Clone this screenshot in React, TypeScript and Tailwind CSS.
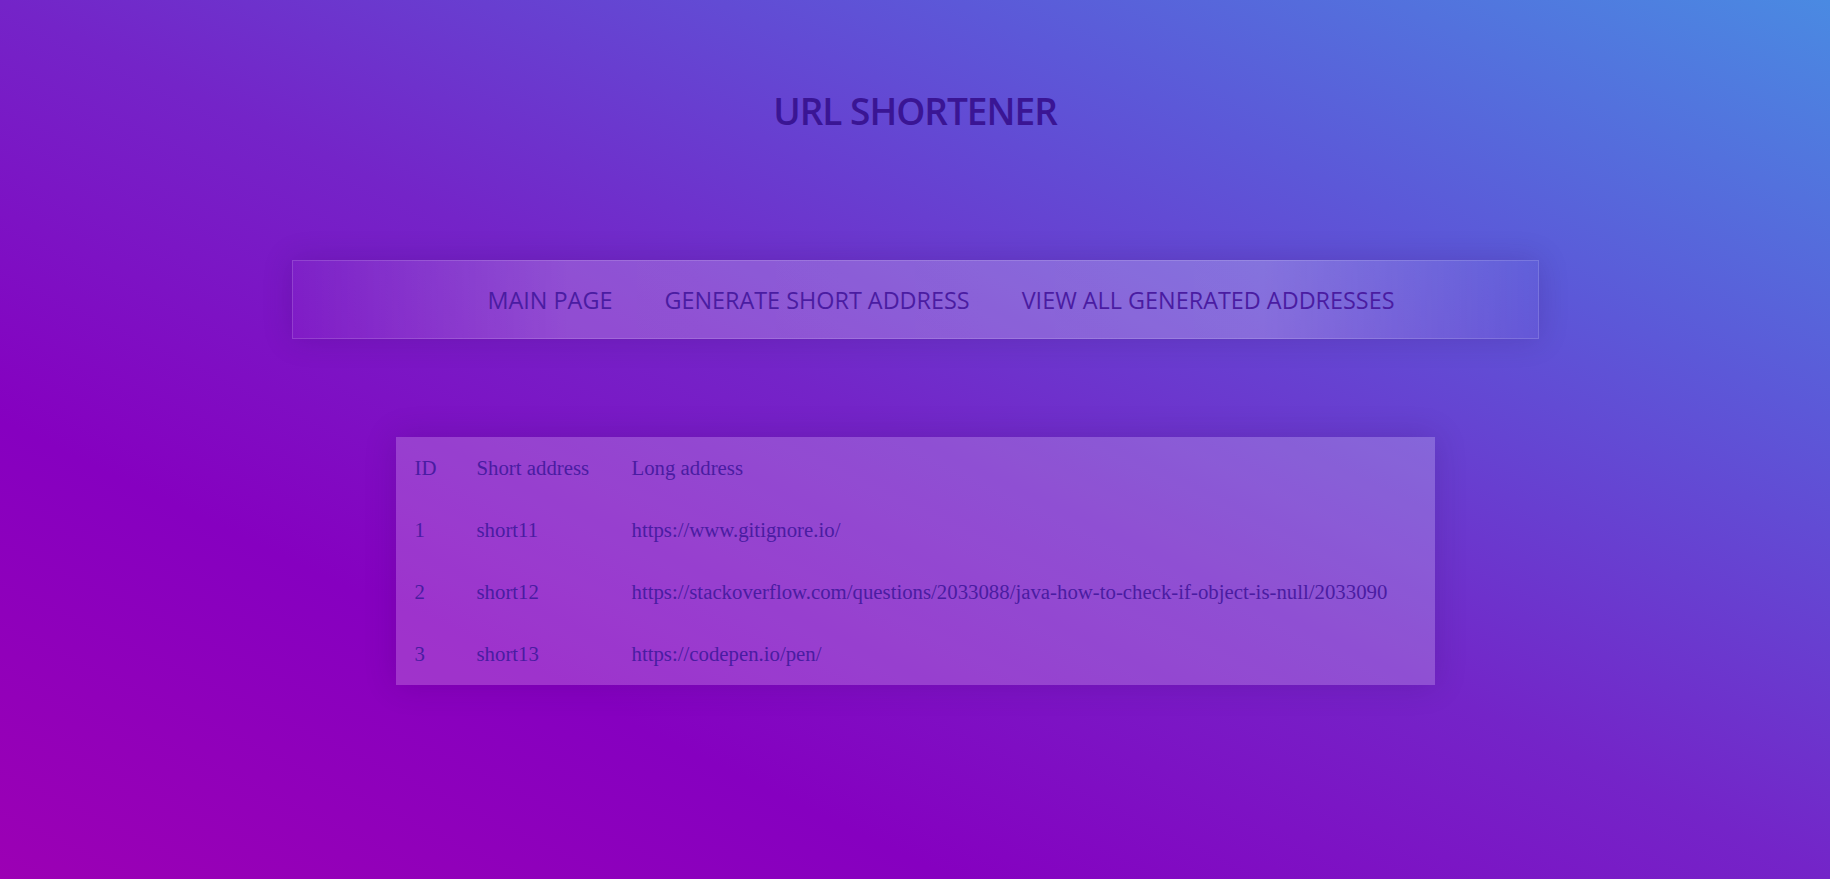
import React from 'react';

interface ShortLink {
  id: number;
  short: string;
  long: string;
}

const links: ShortLink[] = [
  { id: 1, short: 'short11', long: 'https://www.gitignore.io/' },
  { id: 2, short: 'short12', long: 'https://stackoverflow.com/questions/2033088/java-how-to-check-if-object-is-null/2033090' },
  { id: 3, short: 'short13', long: 'https://codepen.io/pen/' },
];

const navItems = ['MAIN PAGE', 'GENERATE SHORT ADDRESS', 'VIEW ALL GENERATED ADDRESSES'];

export default function App() {
  return (
    <div className="min-h-screen w-full bg-[linear-gradient(to_top_right,#9c00b4_0%,#8600c0_26%,#7424c8_50%,#5c58d8_76%,#4a8ae2_100%)] flex flex-col items-center pt-[92px] pb-10">
      {/* Title */}
      <h1 className="font-['Open_Sans',sans-serif] font-semibold text-[37px] leading-none text-[#3a1594] tracking-[-1px]">
        URL SHORTENER
      </h1>

      {/* Nav */}
      <nav className="mt-[131px] w-[1247px] h-[79px] pt-[2px] flex items-center justify-center border border-white/15 bg-[linear-gradient(90deg,rgba(255,255,255,0.03)_0%,rgba(255,255,255,0.2)_22%,rgba(255,255,255,0.22)_78%,rgba(255,255,255,0.03)_100%)] shadow-[0_0_30px_rgba(40,0,80,0.18)]">
        {navItems.map((item) => (
          <a
            key={item}
            href="#"
            className="ml-[52px] font-['Open_Sans',sans-serif] text-[23.4px] text-[#4a1ca2] uppercase"
          >
            {item}
          </a>
        ))}
      </nav>

      {/* Table */}
      <table className="mt-[98px] w-[1039px] table-fixed bg-white/20 shadow-[0_0_30px_rgba(40,0,80,0.18)] font-['Liberation_Serif',serif] text-[20.8px] text-[#4a1ca2]">
        <thead>
          <tr className="h-[62px]">
            <th className="w-[62px] pl-[19px] text-left font-normal">ID</th>
            <th className="w-[155px] pl-[19px] text-left font-normal">Short address</th>
            <th className="pl-[19px] text-left font-normal">Long address</th>
          </tr>
        </thead>
        <tbody>
          {links.map((link) => (
            <tr key={link.id} className="h-[62px]">
              <td className="pl-[19px]">{link.id}</td>
              <td className="pl-[19px]">{link.short}</td>
              <td className="pl-[19px] whitespace-nowrap">{link.long}</td>
            </tr>
          ))}
        </tbody>
      </table>
    </div>
  );
}
